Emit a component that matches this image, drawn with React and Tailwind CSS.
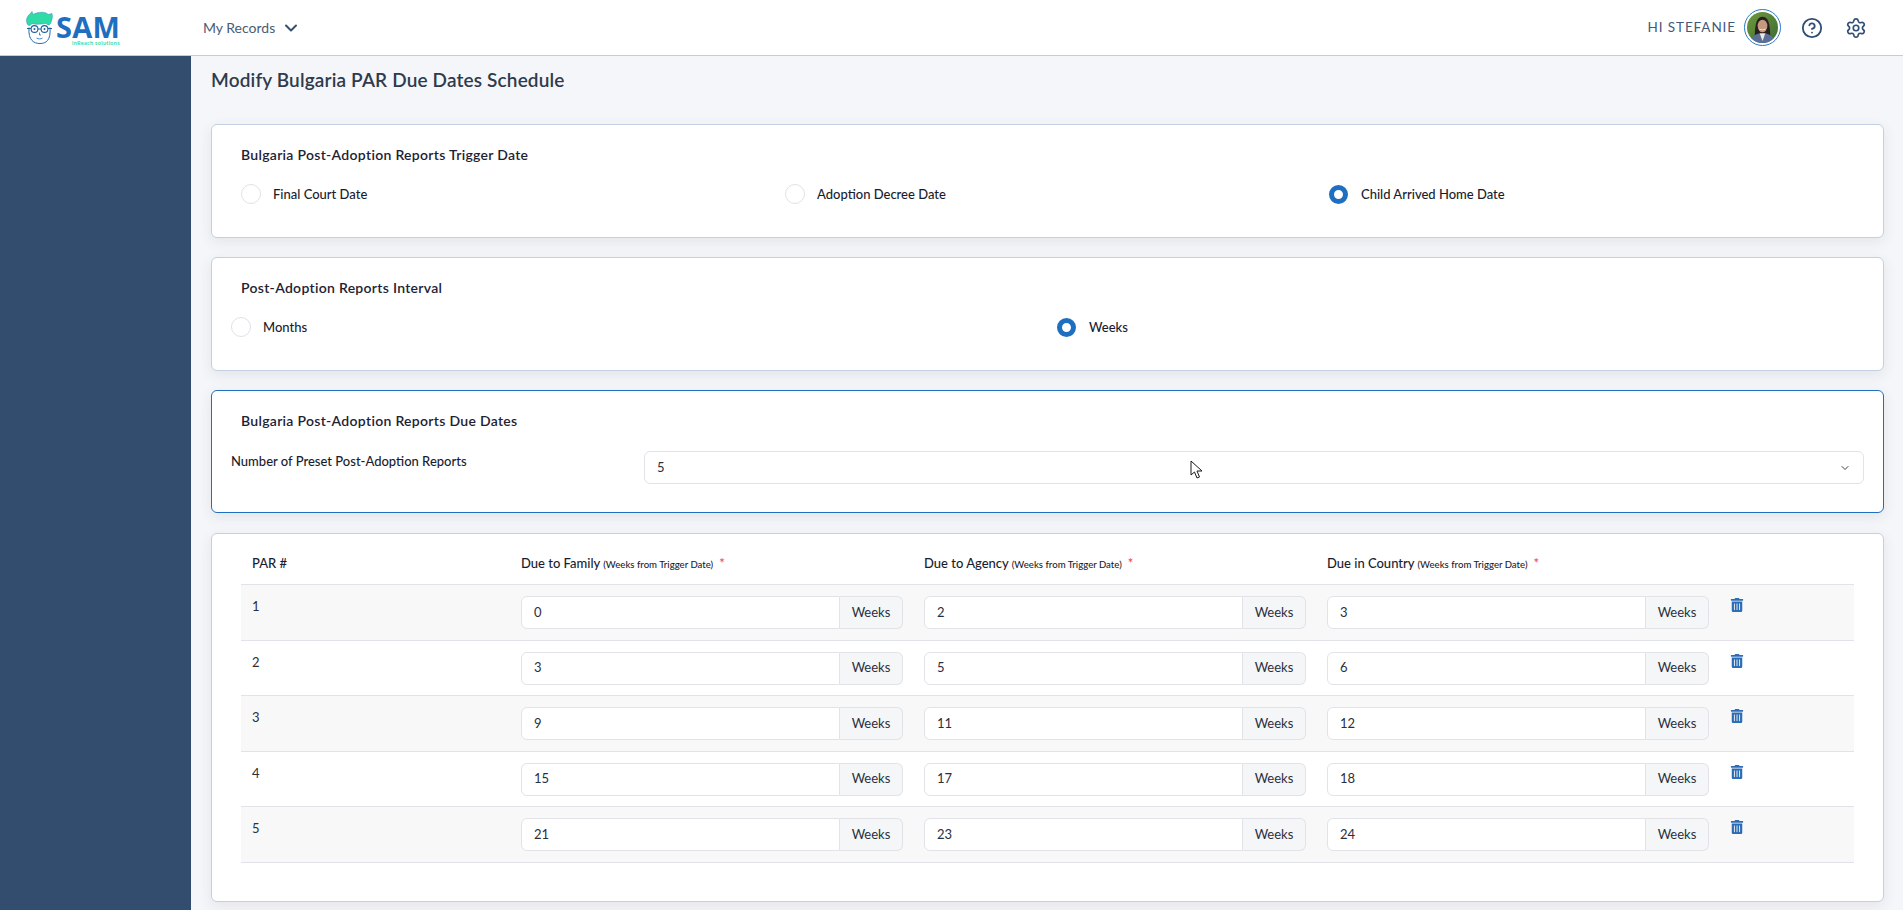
import React from "react";
import { ChevronDown, CircleHelp, Settings } from "lucide-react";
import { FaTrashAlt } from "react-icons/fa";

const Logo = () => (
  <div className="flex items-start w-[100px] h-[36px] ml-[3px]">
    <svg width="32" height="35" viewBox="0 0 32 34" className="shrink-0">
      <path d="M5 17 C4 30 10 33 16 33 C22 33 27 30 26 17" fill="#fff" stroke="#1f6fc0" strokeWidth="1" />
      <path d="M3 13 C1 6 6 4 8 1 L9 4 C14 1 22 1 24 4 L28 3 C29 6 28 9 27 12 C26 15 24 15 22 13 C16 14 10 14 8 13 C7 15 4 16 3 13 Z" fill="#2fdca6" stroke="#1f6fc0" strokeWidth="0.4" />
      <circle cx="10.5" cy="18.5" r="3.4" fill="#fff" stroke="#1f5f99" strokeWidth="1.1" />
      <circle cx="20.5" cy="18.5" r="3.4" fill="#fff" stroke="#1f5f99" strokeWidth="1.1" />
      <path d="M14 18.5h3M3 18h4M24 18h4" stroke="#1f5f99" strokeWidth="1" />
      <circle cx="10.5" cy="18.5" r="1" fill="#1f5f99" />
      <circle cx="20.5" cy="18.5" r="1" fill="#1f5f99" />
      <path d="M15.5 22v2.5h1.5M12.5 27.5c2 1.2 4 1.2 6 0" fill="none" stroke="#1f6fc0" strokeWidth="0.8" />
    </svg>
    <div className="flex flex-col items-end">
      <span className="font-['Open_Sans',sans-serif] font-bold text-[29px] leading-[24px] tracking-[0.2px] text-[#1f6fc0] mt-[5px]">SAM</span>
      <span className="font-['Lato',sans-serif] font-bold text-[5.5px] leading-[6px] tracking-[0.3px] text-[#2fdca6] mt-[1px]">inReach solutions</span>
    </div>
  </div>
);

const Avatar = () => (
  <div className="w-[37px] h-[37px] rounded-full border border-[#2b78c5] p-[2px] bg-white">
    <svg viewBox="0 0 32 32" className="w-full h-full rounded-full">
      <defs>
        <linearGradient id="bgav" x1="0" y1="0" x2="1" y2="1">
          <stop offset="0" stopColor="#6f9a3d" />
          <stop offset="1" stopColor="#3c6a34" />
        </linearGradient>
      </defs>
      <rect width="32" height="32" fill="url(#bgav)" />
      <path d="M8 26 C8 10 11 5 16 5 C21 5 24 10 24 26 Z" fill="#2a1f1c" />
      <ellipse cx="16" cy="14.5" rx="5" ry="6.5" fill="#c49a80" />
      <path d="M12 16.5c2 2 6 2 8 0-1 3-7 3-8 0z" fill="#f2ece6" />
      <path d="M3 32 C4 25 9 23 13 22 L16 28 L19 22 C23 23 28 25 29 32 Z" fill="#5b6f98" />
      <path d="M13 22 L16 30 L19 22 Z" fill="#efe9e4" />
    </svg>
  </div>
);

const Radio = ({ checked }) =>
  checked ? (
    <span className="w-[19px] h-[19px] rounded-full border-[5px] border-[#1f6fc0] bg-white shrink-0 mr-px" />
  ) : (
    <span className="w-[20px] h-[20px] rounded-full border border-[#dfe2e8] bg-white shrink-0" />
  );

const RadioItem = ({ label, checked }) => (
  <label className="flex items-center gap-[12px] text-[13px] leading-[20px] text-[#1a1d2e] font-medium">
    <Radio checked={checked} />
    <span>{label}</span>
  </label>
);

const Card = ({ children, active, className = "" }) => (
  <section
    className={`bg-white rounded-[6px] border shadow-[0_4px_14px_rgba(40,50,70,0.09)] ${active ? "border-[#1f6fc0]" : "border-[#c3d0e4]"} ${className}`}
  >
    {children}
  </section>
);

const CardTitle = ({ children }) => (
  <h2 className="text-[14px] leading-[20px] font-semibold tracking-[0.3px] text-[#1d2233]">{children}</h2>
);

const ColHead = ({ title }) => (
  <div className="text-[13px] leading-[20px] text-[#1a1d2e] font-medium">
    {title} <span className="text-[9.6px]">(Weeks from Trigger Date)</span>
    <span className="text-[#e5484d] ml-[6px] text-[13px]">*</span>
  </div>
);

const WeeksInput = ({ value }) => (
  <div className="flex h-[33px] w-[382px] text-[13px] text-[#2a2f3d]">
    <div className="flex-1 flex items-center pl-[12px] bg-white border border-[#e1e3e9] rounded-l-[6px]">{value}</div>
    <div className="w-[63px] flex items-center justify-center bg-[#f5f6f8] border border-l-0 border-[#e1e3e9] rounded-r-[6px]">Weeks</div>
  </div>
);

const rows = [
  [1, 0, 2, 3],
  [2, 3, 5, 6],
  [3, 9, 11, 12],
  [4, 15, 17, 18],
  [5, 21, 23, 24],
];

const colsClass = "grid grid-cols-[280px_403px_403px_403px_1fr]";

export default function App() {
  return (
    <div className="h-[910px] overflow-hidden flex flex-col bg-[#f5f6f9] font-['Lato',sans-serif]">
      <header className="h-[56px] shrink-0 bg-white border-b border-[#c5ccd8] flex items-center pl-[21px] pr-[36px]">
        <Logo />
        <button className="ml-[79px] flex items-center gap-[6px] text-[14px] text-[#4b5c74]">
          My Records
          <ChevronDown size={20} strokeWidth={2.4} className="text-[#35506f]" />
        </button>
        <div className="ml-auto flex items-center">
          <span className="text-[13.5px] tracking-[0.9px] text-[#3f5a7d] mr-[8px]">HI STEFANIE</span>
          <Avatar />
          <CircleHelp size={22} strokeWidth={2} className="ml-[20px] text-[#2f4f75]" />
          <Settings size={22} strokeWidth={1.8} className="ml-[22px] text-[#2f4f75]" />
        </div>
      </header>

      <div className="flex flex-1 min-h-0">
        <aside className="w-[191px] shrink-0 bg-[#324d6e]" />
        <main className="flex-1 min-w-0 pl-[20px] pr-[19px] relative">
          <h1 className="text-[19px] leading-[24px] font-semibold tracking-[0.15px] text-[#2f3b4c] mt-[12px] mb-[32px]">
            Modify Bulgaria PAR Due Dates Schedule
          </h1>

          <div className="flex flex-col gap-[19px]">
            <Card className="h-[114px] pt-[20px] pl-[29px]">
              <CardTitle>Bulgaria Post-Adoption Reports Trigger Date</CardTitle>
              <div className="grid grid-cols-[544px_544px_1fr] mt-[19px]">
                <RadioItem label="Final Court Date" />
                <RadioItem label="Adoption Decree Date" />
                <RadioItem label="Child Arrived Home Date" checked />
              </div>
            </Card>

            <Card className="h-[114px] pt-[20px] pl-[29px]">
              <CardTitle>Post-Adoption Reports Interval</CardTitle>
              <div className="grid grid-cols-[826px_1fr] mt-[19px] -ml-[10px]">
                <RadioItem label="Months" />
                <RadioItem label="Weeks" checked />
              </div>
            </Card>

            <Card active className="h-[123px] pt-[20px] pl-[29px] mb-px">
              <CardTitle>Bulgaria Post-Adoption Reports Due Dates</CardTitle>
              <div className="flex items-start mt-[20px] -ml-[10px] pr-[19px]">
                <span className="w-[413px] text-[13px] leading-[20px] font-medium text-[#1a1d2e]">
                  Number of Preset Post-Adoption Reports
                </span>
                <div className="flex-1 h-[33px] flex items-center justify-between px-[12px] rounded-[6px] border border-[#e1e3e9] text-[13px] text-[#2a2f3d]">
                  5
                  <ChevronDown size={12} strokeWidth={2} className="text-[#3a4050]" />
                </div>
              </div>
            </Card>

            <Card className="h-[369px] pl-[29px] pr-[29px] pt-[19px]">
              <div className={`${colsClass} h-[31px] items-start`}>
                <div className="pl-[11px] text-[13px] leading-[20px] text-[#1a1d2e] font-medium">PAR #</div>
                <ColHead title="Due to Family" />
                <ColHead title="Due to Agency" />
                <ColHead title="Due in Country" />
                <div />
              </div>
              <div className="border-b border-[#e1e3e8]">
                {rows.map(([n, a, b, c]) => (
                  <div
                    key={n}
                    className={`${colsClass} h-[55.5px] border-t border-[#e1e3e8] pt-[11px] ${n % 2 === 1 ? "bg-[#f8f8f9]" : "bg-white"}`}
                  >
                    <div className="pl-[11px] text-[13px] leading-[20px] text-[#2a2f3d]">{n}</div>
                    <WeeksInput value={a} />
                    <WeeksInput value={b} />
                    <WeeksInput value={c} />
                    <div className="pt-[2px]">
                      <FaTrashAlt size={14} className="text-[#2b6cb5]" />
                    </div>
                  </div>
                ))}
              </div>
            </Card>
          </div>

          <svg width="14" height="20" viewBox="0 0 14 20" className="absolute left-[999px] top-[404px]">
            <path d="M1 1 L1 15 L4.5 12 L7 18 L9.5 17 L7 11 L12 11 Z" fill="#fff" stroke="#1a1a1a" strokeWidth="1" />
          </svg>
        </main>
      </div>
    </div>
  );
}
